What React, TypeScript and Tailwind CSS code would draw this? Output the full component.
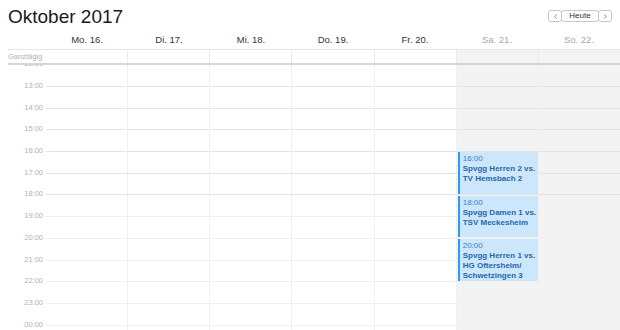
import { ChevronLeft, ChevronRight } from "lucide-react";

type Day = { label: string; weekend: boolean };

type CalEvent = { start: number; span: number; time: string; lines: string[] };

const days: Day[] = [
  { label: "Mo. 16.", weekend: false },
  { label: "Di. 17.", weekend: false },
  { label: "Mi. 18.", weekend: false },
  { label: "Do. 19.", weekend: false },
  { label: "Fr. 20.", weekend: false },
  { label: "Sa. 21.", weekend: true },
  { label: "So. 22.", weekend: true },
];

const hours = [
  "12:00", "13:00", "14:00", "15:00", "16:00", "17:00", "18:00",
  "19:00", "20:00", "21:00", "22:00", "23:00", "00:00",
];

const HOUR = 21.7;
const OFFSET = -0.7;

// events of Saturday, start = index in hours
const saturday: CalEvent[] = [
  { start: 4, span: 2, time: "16:00", lines: ["Spvgg Herren 2 vs.", "TV Hemsbach 2"] },
  { start: 6, span: 2, time: "18:00", lines: ["Spvgg Damen 1 vs.", "TSV Meckesheim"] },
  { start: 8, span: 2, time: "20:00", lines: ["Spvgg Herren 1 vs.", "HG Oftersheim/", "Schwetzingen 3"] },
];

const EventBlock = ({ ev }: { ev: CalEvent }) => (
  <div
    className="absolute left-[1px] right-0 overflow-hidden border-l-2 border-[#2b9bf0] bg-[#cce7fb] pl-[3px] pt-[2px] text-[8px] leading-[10px] text-[#2766a8]"
    style={{ top: OFFSET + ev.start * HOUR + 1, height: ev.span * HOUR - 1.5 }}
  >
    <div className="text-[#3a7cc0]">{ev.time}</div>
    {ev.lines.map((l) => (
      <div key={l} className="whitespace-nowrap font-bold">
        {l}
      </div>
    ))}
  </div>
);

export default function App() {
  return (
    <div className="h-[330px] w-[620px] overflow-hidden bg-white font-['Liberation_Sans',Arial,sans-serif] text-[#222]">
      <div className="flex h-[30px] items-start justify-between px-2">
        <h1 className="pt-[7px] text-[19px] leading-none font-normal text-[#1a1a1a]">Oktober 2017</h1>
        <div className="mt-[10px] flex h-[12px] text-[8px] text-[#333]">
          <button className="flex w-[14px] items-center justify-center rounded-[3px] border border-[#c9c9c9] bg-white">
            <ChevronLeft size={7} strokeWidth={2.5} className="text-[#555]" />
          </button>
          <button className="-ml-px flex w-[38px] items-center justify-center rounded-[3px] border border-[#c9c9c9] bg-white leading-none">
            Heute
          </button>
          <button className="-ml-px flex w-[14px] items-center justify-center rounded-[3px] border border-[#c9c9c9] bg-white">
            <ChevronRight size={7} strokeWidth={2.5} className="text-[#555]" />
          </button>
        </div>
      </div>

      <div className="flex h-[19px]">
        <div className="w-[46px]" />
        {days.map((d) => (
          <div
            key={d.label}
            className={`flex-1 text-center text-[9.5px] leading-[19px] ${d.weekend ? "text-[#a9a9a9]" : "text-[#333]"}`}
          >
            {d.label}
          </div>
        ))}
      </div>

      <div className="ml-2 flex h-[14px] border-t border-[#e6e6e6]">
        <div className="w-[38px] text-[7.5px] leading-[13px] text-[#b0b0b0]">Ganztägig</div>
        {days.map((d, i) => (
          <div
            key={d.label}
            className={`flex-1 ${i > 0 ? "border-l border-[#ebebeb]" : ""} ${d.weekend ? "bg-[#f3f3f3]" : ""}`}
          />
        ))}
      </div>
      <div className="ml-2 h-[2px] bg-[#d6d6d6]" />

      <div className="flex h-[265px] overflow-hidden">
        <div className="w-[46px] overflow-hidden">
          <div style={{ marginTop: OFFSET }}>
            {hours.map((h) => (
              <div key={h} className="relative pr-[3px] text-right" style={{ height: HOUR }}>
                <span className="block -translate-y-1/2 text-[7.5px] leading-[8px] text-[#b3b3b3]">{h}</span>
              </div>
            ))}
          </div>
        </div>
        {days.map((d, i) => (
          <div
            key={d.label}
            className={`relative flex-1 ${i > 0 ? "border-l border-[#f0f0f0]" : ""} ${d.weekend ? "bg-[#f3f3f3]" : ""}`}
          >
            <div style={{ marginTop: OFFSET }}>
              {hours.map((h, k) => (
                <div
                  key={h}
                  className={`border-t ${k <= 6 ? "border-[#e4e4e4]" : "border-[#f0f0f0]"}`}
                  style={{ height: HOUR }}
                />
              ))}
            </div>
            {i === 5 && saturday.map((ev) => <EventBlock key={ev.time} ev={ev} />)}
          </div>
        ))}
      </div>
    </div>
  );
}
